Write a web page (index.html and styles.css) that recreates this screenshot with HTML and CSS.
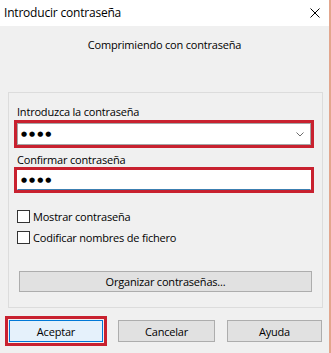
FILE: index.html
```html
<!DOCTYPE html>
<html lang="es">
<head>
    <meta charset="UTF-8">
    <title>Introducir contraseña</title>
    <link rel="stylesheet" href="styles.css">
</head>
<body>
    <div class="window">
        <div class="titlebar">
            <span class="title">Introducir contraseña</span>
            <svg class="close" width="10" height="10" viewBox="0 0 10 10">
                <path d="M0.5 0.5 L9.5 9.5 M9.5 0.5 L0.5 9.5" stroke="#000" stroke-width="1" fill="none"/>
            </svg>
        </div>
        <div class="content">
            <div class="subtitle">Comprimiendo con contraseña</div>
            <div class="group">
                <div class="label first">Introduzca la contraseña</div>
                <div class="mark">
                    <div class="field combo">
                        <span class="dots">●●●●</span>
                        <svg class="chevron" width="8" height="5" viewBox="0 0 8 5">
                            <path d="M0.5 0.5 L4 4 L7.5 0.5" stroke="#6d6d6d" stroke-width="1" fill="none"/>
                        </svg>
                    </div>
                </div>
                <div class="label second">Confirmar contraseña</div>
                <div class="mark">
                    <div class="field text">
                        <span class="dots">●●●●</span>
                    </div>
                </div>
                <div class="check first-check"><span class="box"></span>Mostrar contraseña</div>
                <div class="check"><span class="box"></span>Codificar nombres de fichero</div>
                <div class="btn wide">Organizar contraseñas...</div>
            </div>
            <div class="footer">
                <div class="mark ok-mark">
                    <div class="btn ok">Aceptar</div>
                </div>
                <div class="btn cancel">Cancelar</div>
                <div class="btn help">Ayuda</div>
            </div>
        </div>
    </div>
</body>
</html>
```
FILE: styles.css
```css
body {
    margin: 0;
    font-family: "Open Sans", "Noto Sans", sans-serif;
    font-size: 11px;
    letter-spacing: -0.2px;
    color: #000;
    background: #f0f0f0;
}

.window {
    width: 331px;
    height: 353px;
    box-sizing: border-box;
    border-right: 2px solid #e3a68d;
    background: #f0f0f0;
    overflow: hidden;
}

.titlebar {
    height: 26px;
    background: #fff;
    display: flex;
    align-items: center;
    justify-content: space-between;
    padding: 0 9px 0 4px;
}

.title {
    font-size: 12px;
    line-height: 16px;
}

.close {
    display: block;
}

.subtitle {
    text-align: center;
    line-height: 16px;
    padding-top: 11px;
}

.group {
    margin: 39px 0 0 8px;
    width: 315px;
    height: 216px;
    box-sizing: border-box;
    border: 1px solid #dcdcdc;
    padding-top: 11px;
}

.label {
    padding-left: 8px;
    line-height: 16px;
}

.label.second {
    margin-top: 4px;
    line-height: 15px;
}

.mark {
    border: 3px solid #c8212f;
    margin-left: 5px;
    width: 300px;
    box-sizing: border-box;
}

.field {
    background: #fff;
    border: 1px solid #a5a5a5;
    display: flex;
    align-items: center;
    justify-content: space-between;
    padding: 0 6px 0 3px;
}

.combo {
    height: 22px;
    box-sizing: border-box;
}

.text {
    height: 20px;
    box-sizing: border-box;
    border-color: #fff #fff #3c7fb1 #fff;
}

.dots {
    font-family: "DejaVu Sans", sans-serif;
    font-size: 7px;
    letter-spacing: 2px;
}

.chevron {
    display: block;
}

.check {
    display: flex;
    align-items: center;
    height: 16px;
    padding-left: 8px;
    margin-top: 5px;
}

.check.first-check {
    margin-top: 15px;
}

.box {
    width: 13px;
    height: 13px;
    box-sizing: border-box;
    border: 1px solid #333;
    background: #fff;
    margin-right: 3px;
}

.btn {
    height: 22px;
    box-sizing: border-box;
    background: #e1e1e1;
    border: 1px solid #adadad;
    display: flex;
    align-items: center;
    justify-content: center;
}

.btn.wide {
    margin: 26px 0 0 10px;
    width: 293px;
    height: 21px;
}

.footer {
    display: flex;
    align-items: center;
    margin-top: 8px;
    padding-left: 5px;
}

.ok-mark {
    margin-left: 0;
    width: auto;
    padding: 1px;
}

.btn.ok {
    width: 94px;
    background: #e5f1fb;
    border-color: #0078d7;
}

.btn.cancel {
    width: 97px;
    margin-left: 11px;
}

.btn.help {
    width: 95px;
    margin-left: 12px;
}
```
